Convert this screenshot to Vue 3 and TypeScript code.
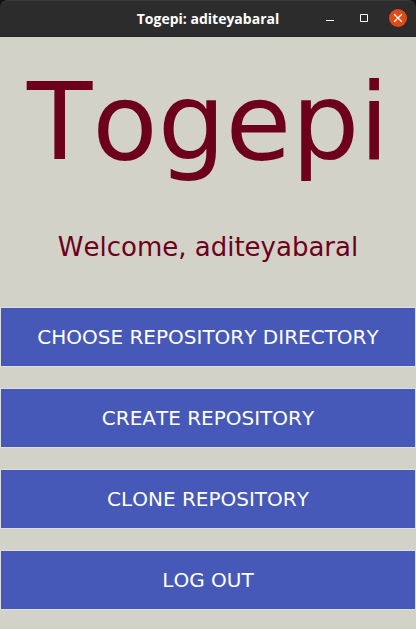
<script setup lang="ts">
const user = 'aditeyabaral'
const actions: string[] = [
  'CHOOSE REPOSITORY DIRECTORY',
  'CREATE REPOSITORY',
  'CLONE REPOSITORY',
  'LOG OUT',
]
</script>

<template>
  <div class="window">
    <div class="frame">
      <header class="titlebar">
        <span class="title">Togepi: {{ user }}</span>
        <div class="controls">
          <button class="control" type="button" aria-label="Minimize">
            <svg viewBox="0 0 20 19" width="20" height="19"><path d="M6 11.5h8" stroke="#fff" /></svg>
          </button>
          <button class="control" type="button" aria-label="Maximize">
            <svg viewBox="0 0 20 19" width="20" height="19"><path d="M6.5 5.5h7v7h-7z" fill="none" stroke="#fff" /></svg>
          </button>
          <button class="control" type="button" aria-label="Close">
            <svg viewBox="0 0 20 19" width="20" height="19">
              <circle cx="10" cy="9" r="9" fill="#df4a16" />
              <path d="M6.2 5.2l7.6 7.6m0-7.6l-7.6 7.6" stroke="#fff" stroke-width="1.3" />
            </svg>
          </button>
        </div>
      </header>
    </div>
    <main class="content">
      <h1 class="brand">Togepi</h1>
      <p class="welcome">Welcome, {{ user }}</p>
      <nav class="actions">
        <button v-for="action in actions" :key="action" class="action" type="button">{{ action }}</button>
      </nav>
    </main>
  </div>
</template>

<style>
body {
  background: #d3d2c9;
}
</style>

<style scoped>
.window {
  min-height: 100vh;
  background: #d3d2c9;
  font-family: "DejaVu Sans", sans-serif;
  color: #6d001a;
}
.frame {
  background: #121212;
}
.titlebar {
  box-sizing: border-box;
  display: grid;
  grid-template-columns: 1fr auto 1fr;
  align-items: center;
  height: 37px;
  background: #2c2c2c;
  border-top: 1px solid #3c3c3c;
  border-bottom: 1px solid #262626;
  border-radius: 8px 8px 0 0;
}
.title {
  grid-column: 2;
  color: #fff;
  font: bold 14px/20px "Open Sans", "Noto Sans", sans-serif;
}
.controls {
  display: flex;
  justify-content: flex-end;
  gap: 14px;
  padding-right: 8px;
}
.control {
  display: flex;
  padding: 0;
  border: 0;
  background: none;
}
.content {
  font-kerning: none;
  text-align: center;
}
.brand {
  margin: 0;
  padding-top: 23px;
  font-size: 107px;
  line-height: 124px;
  font-weight: 400;
}
.welcome {
  margin: 0;
  padding: 47px 0 44px;
  font-size: 26px;
  line-height: 32px;
}
.actions {
  display: grid;
  gap: 21px;
}
.action {
  height: 60px;
  padding: 0;
  border: 1px solid #dddddb;
  background: #4659b8;
  color: #fff;
  font: 20px/24px "DejaVu Sans", sans-serif;
  font-kerning: none;
}
</style>
